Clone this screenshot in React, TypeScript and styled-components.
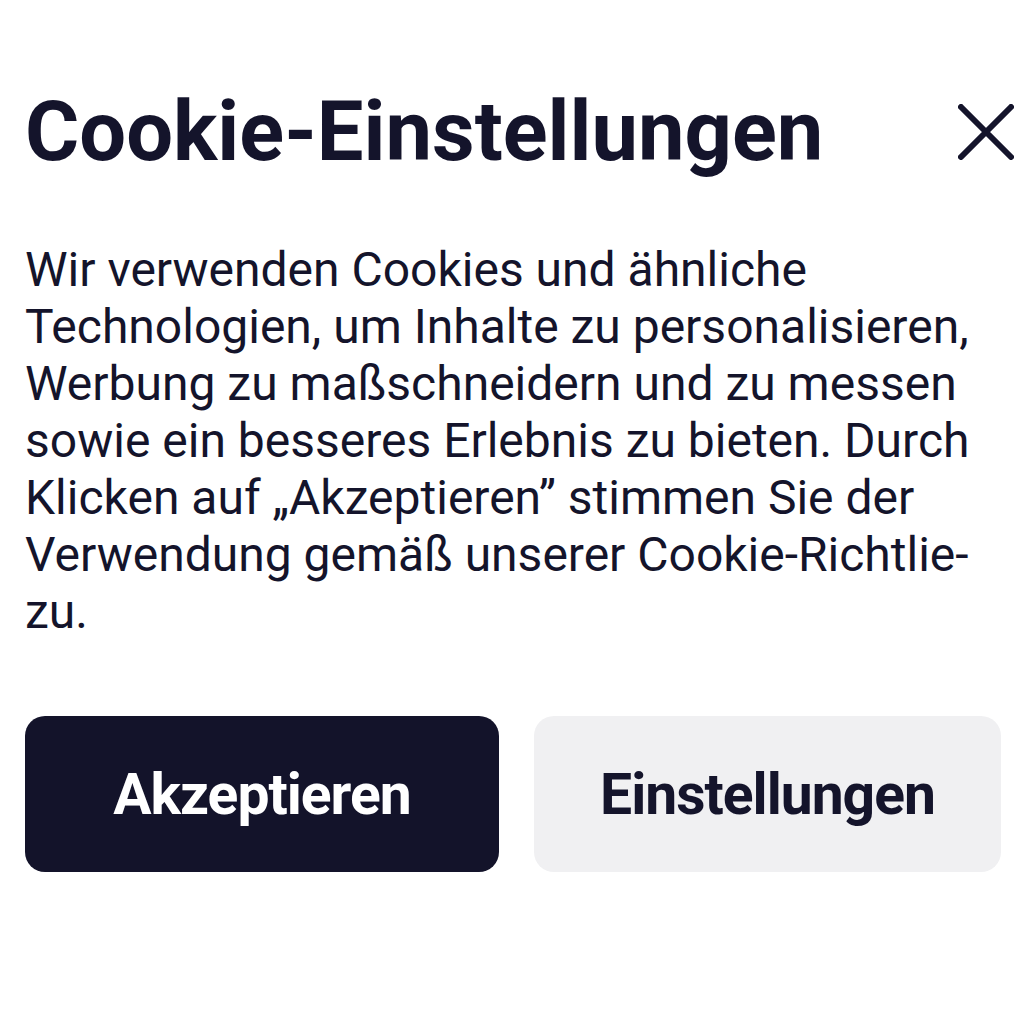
import React from "react";
import styled, { createGlobalStyle } from "styled-components";

const Global = createGlobalStyle`
  html, body { margin: 0; padding: 0; background: #ffffff; }
  body { font-family: Roboto, "Noto Sans", sans-serif; color: #14142b; }
`;

const Page = styled.div`
  width: 1024px;
  height: 1024px;
  box-sizing: border-box;
  padding: 86px 6px 0 25px;
  display: flex;
  flex-direction: column;
`;

const Header = styled.div`
  display: flex;
  align-items: center;
  justify-content: space-between;
`;

const Title = styled.h1`
  margin: 0;
  font-size: 83px;
  font-weight: 700;
  line-height: 92px;
  color: #14142b;
`;

const CloseButton = styled.button`
  border: none;
  background: none;
  padding: 0;
  width: 64px;
  height: 64px;
  display: flex;
  align-items: center;
  justify-content: center;
  cursor: pointer;
`;

const Body = styled.p`
  margin: 63px 0 0 0;
  font-size: 48px;
  font-weight: 400;
  line-height: 57px;
  color: #14142b;
`;

const Actions = styled.div`
  display: grid;
  grid-template-columns: 474px 467px;
  gap: 35px;
  margin-top: 76px;
`;

const Button = styled.button<{ $primary?: boolean }>`
  height: 156px;
  border: none;
  border-radius: 20px;
  font-family: Roboto, "Noto Sans", sans-serif;
  font-size: 57px;
  font-weight: 700;
  letter-spacing: -1px;
  background: ${(p) => (p.$primary ? "#13132a" : "#f0f0f2")};
  color: ${(p) => (p.$primary ? "#ffffff" : "#14142b")};
  cursor: pointer;
`;

export default function App() {
  return (
    <>
      <Global />
      <Page>
        <Header>
          <Title>Cookie-Einstellungen</Title>
          <CloseButton aria-label="Schließen">
            <svg width="56" height="56" viewBox="0 0 56 56">
              <path d="M3 3 L53 53 M53 3 L3 53" stroke="#14142b" strokeWidth="6" strokeLinecap="round" fill="none" />
            </svg>
          </CloseButton>
        </Header>
        <Body>
          Wir verwenden Cookies und ähnliche<br />
          Technologien, um Inhalte zu personalisieren,<br />
          Werbung zu maßschneidern und zu messen<br />
          sowie ein besseres Erlebnis zu bieten. Durch<br />
          Klicken auf „Akzeptieren” stimmen Sie der<br />
          Verwendung gemäß unserer Cookie-Richtlie-<br />
          zu.
        </Body>
        <Actions>
          <Button $primary>Akzeptieren</Button>
          <Button>Einstellungen</Button>
        </Actions>
      </Page>
    </>
  );
}
